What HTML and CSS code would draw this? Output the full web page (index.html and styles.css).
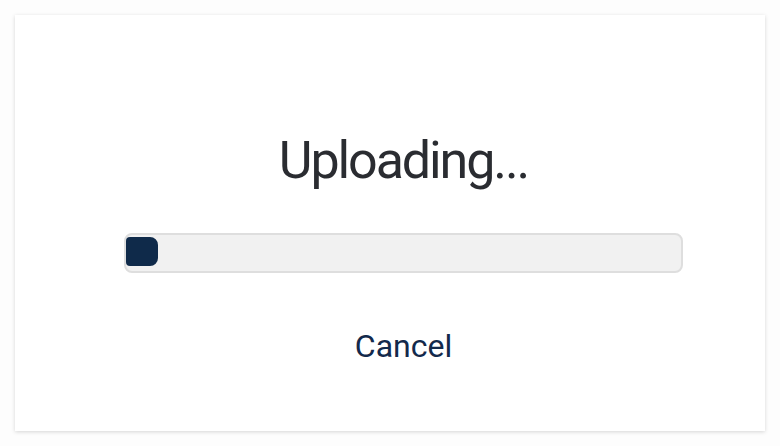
FILE: index.html
```html
<!DOCTYPE html>
<html lang="en">
<head>
  <meta charset="UTF-8" />
  <meta name="viewport" content="width=device-width, initial-scale=1.0"/>
  <title>Uploading</title>
  <link rel="stylesheet" href="styles.css">
</head>
<body>
  <div class="card">
    <h1 class="title">Uploading...</h1>

    <div class="progress">
      <div class="progress-fill" style="width: 32px"></div>
    </div>

    <button class="cancel" type="button">Cancel</button>
  </div>
</body>
</html>
```

FILE: styles.css
```css
body {
  font-family: Roboto, "Helvetica Neue", Arial, sans-serif;
  background: #fdfdfd;
  margin: 0;
  padding: 15px;
}

.card {
  width: 750px;
  height: 416px;
  box-sizing: border-box;
  background: white;
  box-shadow: 0 1px 4px rgba(0, 0, 0, 0.16);
  display: flex;
  flex-direction: column;
  align-items: center;
  padding: 116px 0 0 27px;
}

.title {
  margin: 0;
  font-size: 52px;
  line-height: 60px;
  font-weight: 400;
  color: #2a2c31;
  letter-spacing: -2.1px;
}

.progress {
  width: 559px;
  height: 40px;
  box-sizing: border-box;
  margin-top: 42px;
  background: #f1f1f1;
  border: 2px solid #dedede;
  border-radius: 8px;
  padding: 2px 0 5px 0;
}

.progress-fill {
  height: 100%;
  background: #0f2a4a;
  border-radius: 4px 8px 8px 4px;
}

.cancel {
  margin-top: 54px;
  background: none;
  border: none;
  padding: 0;
  font-family: inherit;
  font-size: 32px;
  color: #13294b;
  cursor: pointer;
}
```
